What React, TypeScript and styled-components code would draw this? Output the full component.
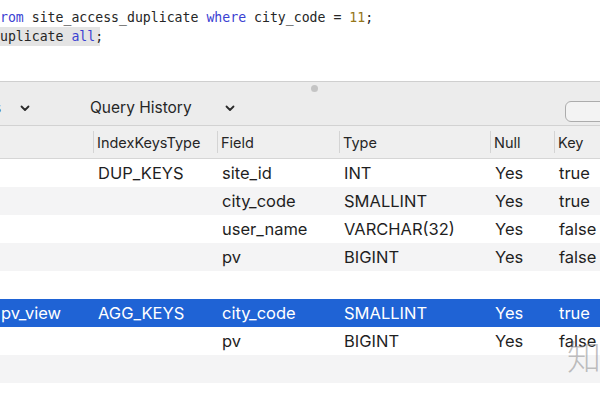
import styled, { createGlobalStyle } from 'styled-components';

const GlobalStyle = createGlobalStyle`
  html, body {
    margin: 0;
    padding: 0;
    background: #ffffff;
    overflow: hidden;
  }
`;

const Page = styled.div`
  position: relative;
  width: 600px;
  height: 400px;
  overflow: hidden;
  font-family: Inter, "Liberation Sans", sans-serif;
  color: #1f1f1f;
`;

const Editor = styled.div`
  height: 81px;
  padding-top: 8px;
  box-sizing: border-box;
  font-family: "DejaVu Sans Mono", "Liberation Mono", monospace;
  font-size: 13.2px;
  color: #262626;
`;

const CodeLine = styled.div<{ $highlighted?: boolean }>`
  height: 19px;
  line-height: 19px;
  white-space: pre;
  margin-left: -8px;
  width: ${(p) => (p.$highlighted ? '108px' : 'auto')};
  background: ${(p) => (p.$highlighted ? '#e4e4e4' : 'transparent')};
`;

const Keyword = styled.span`
  color: #3b3fd2;
`;

const NumberLit = styled.span`
  color: #957619;
`;

const Panel = styled.div`
  border-top: 1px solid #cfcfcf;
`;

const Toolbar = styled.div`
  position: relative;
  height: 44px;
  background: #ececec;
  border-bottom: 1px solid #d2d2d2;
  display: flex;
  align-items: flex-start;
  padding-top: 16px;
  box-sizing: border-box;
  font-size: 15.5px;
  color: #262626;
`;

const Handle = styled.div`
  position: absolute;
  left: 311px;
  top: 3px;
  width: 7px;
  height: 7px;
  border-radius: 50%;
  background: #c4c4c4;
`;

const Selector = styled.div<{ $width: number; $offset?: number }>`
  display: flex;
  align-items: center;
  justify-content: space-between;
  width: ${(p) => p.$width}px;
  margin-left: ${(p) => p.$offset ?? 0}px;
  height: 20px;
  line-height: 20px;
`;

const SearchField = styled.div`
  margin-left: auto;
  margin-top: 3px;
  margin-right: -20px;
  width: 53px;
  height: 19px;
  border: 1px solid #acacac;
  border-radius: 6px;
  background: #f3f3f3;
`;

const Grid = styled.div`
  display: grid;
  grid-template-columns: 93px 124px 122px 151px 64px 1fr;
`;

const HeaderRow = styled(Grid)`
  height: 33px;
  background: #efefef;
  border-bottom: 1px solid #d6d6d6;
  box-sizing: border-box;
  font-size: 14.5px;
  color: #262626;
`;

const HeaderCell = styled.div<{ $first?: boolean }>`
  display: flex;
  align-items: center;
  padding-left: 3px;
  border-left: ${(p) => (p.$first ? 'none' : '1px solid #d4d4d4')};
  margin: 5px 0;
`;

const Row = styled(Grid)<{ $tone: 'white' | 'gray' | 'selected' }>`
  height: 28px;
  font-size: 16.5px;
  background: ${(p) =>
    p.$tone === 'selected' ? '#1f63d5' : p.$tone === 'gray' ? '#f4f4f5' : '#ffffff'};
  color: ${(p) => (p.$tone === 'selected' ? '#ffffff' : '#1f1f1f')};
`;

const Cell = styled.div<{ $first?: boolean }>`
  display: flex;
  align-items: center;
  padding-left: ${(p) => (p.$first ? '1px' : '5px')};
  white-space: nowrap;
  overflow: hidden;
`;

const Watermark = styled.div`
  position: absolute;
  left: 567px;
  top: 331px;
  font-family: "Noto Sans CJK SC", sans-serif;
  font-size: 34px;
  font-weight: 300;
  color: rgba(140, 140, 140, 0.55);
`;

const Chevron = () => (
  <svg width="10" height="7" viewBox="0 0 10 7">
    <polyline
      points="1.5,1.5 5,5 8.5,1.5"
      fill="none"
      stroke="#2a2a2a"
      strokeWidth="1.8"
      strokeLinecap="round"
      strokeLinejoin="round"
    />
  </svg>
);

type Tone = 'white' | 'gray' | 'selected';

const rows: { tone: Tone; cells: string[] }[] = [
  { tone: 'white', cells: ['', 'DUP_KEYS', 'site_id', 'INT', 'Yes', 'true'] },
  { tone: 'gray', cells: ['', '', 'city_code', 'SMALLINT', 'Yes', 'true'] },
  { tone: 'white', cells: ['', '', 'user_name', 'VARCHAR(32)', 'Yes', 'false'] },
  { tone: 'gray', cells: ['', '', 'pv', 'BIGINT', 'Yes', 'false'] },
  { tone: 'white', cells: ['', '', '', '', '', ''] },
  { tone: 'selected', cells: ['pv_view', 'AGG_KEYS', 'city_code', 'SMALLINT', 'Yes', 'true'] },
  { tone: 'white', cells: ['', '', 'pv', 'BIGINT', 'Yes', 'false'] },
  { tone: 'gray', cells: ['', '', '', '', '', ''] },
  { tone: 'white', cells: ['', '', '', '', '', ''] },
];

const headers = ['', 'IndexKeysType', 'Field', 'Type', 'Null', 'Key'];

export default function App() {
  return (
    <Page>
      <GlobalStyle />
      <Editor>
        <CodeLine>
          <Keyword>from</Keyword> site_access_duplicate <Keyword>where</Keyword> city_code ={' '}
          <NumberLit>11</NumberLit>;
        </CodeLine>
        <CodeLine $highlighted>
          duplicate <Keyword>all</Keyword>;
        </CodeLine>
      </Editor>
      <Panel>
        <Toolbar>
          <Handle />
          <Selector $width={37} $offset={-7}>
            <span>s</span>
            <Chevron />
          </Selector>
          <Selector $width={145} $offset={60}>
            <span>Query History</span>
            <Chevron />
          </Selector>
          <SearchField />
        </Toolbar>
        <HeaderRow>
          {headers.map((h, i) => (
            <HeaderCell key={i} $first={i === 0}>
              {h}
            </HeaderCell>
          ))}
        </HeaderRow>
        {rows.map((r, i) => (
          <Row key={i} $tone={r.tone}>
            {r.cells.map((c, j) => (
              <Cell key={j} $first={j === 0}>
                {c}
              </Cell>
            ))}
          </Row>
        ))}
      </Panel>
      <Watermark>知</Watermark>
    </Page>
  );
}
